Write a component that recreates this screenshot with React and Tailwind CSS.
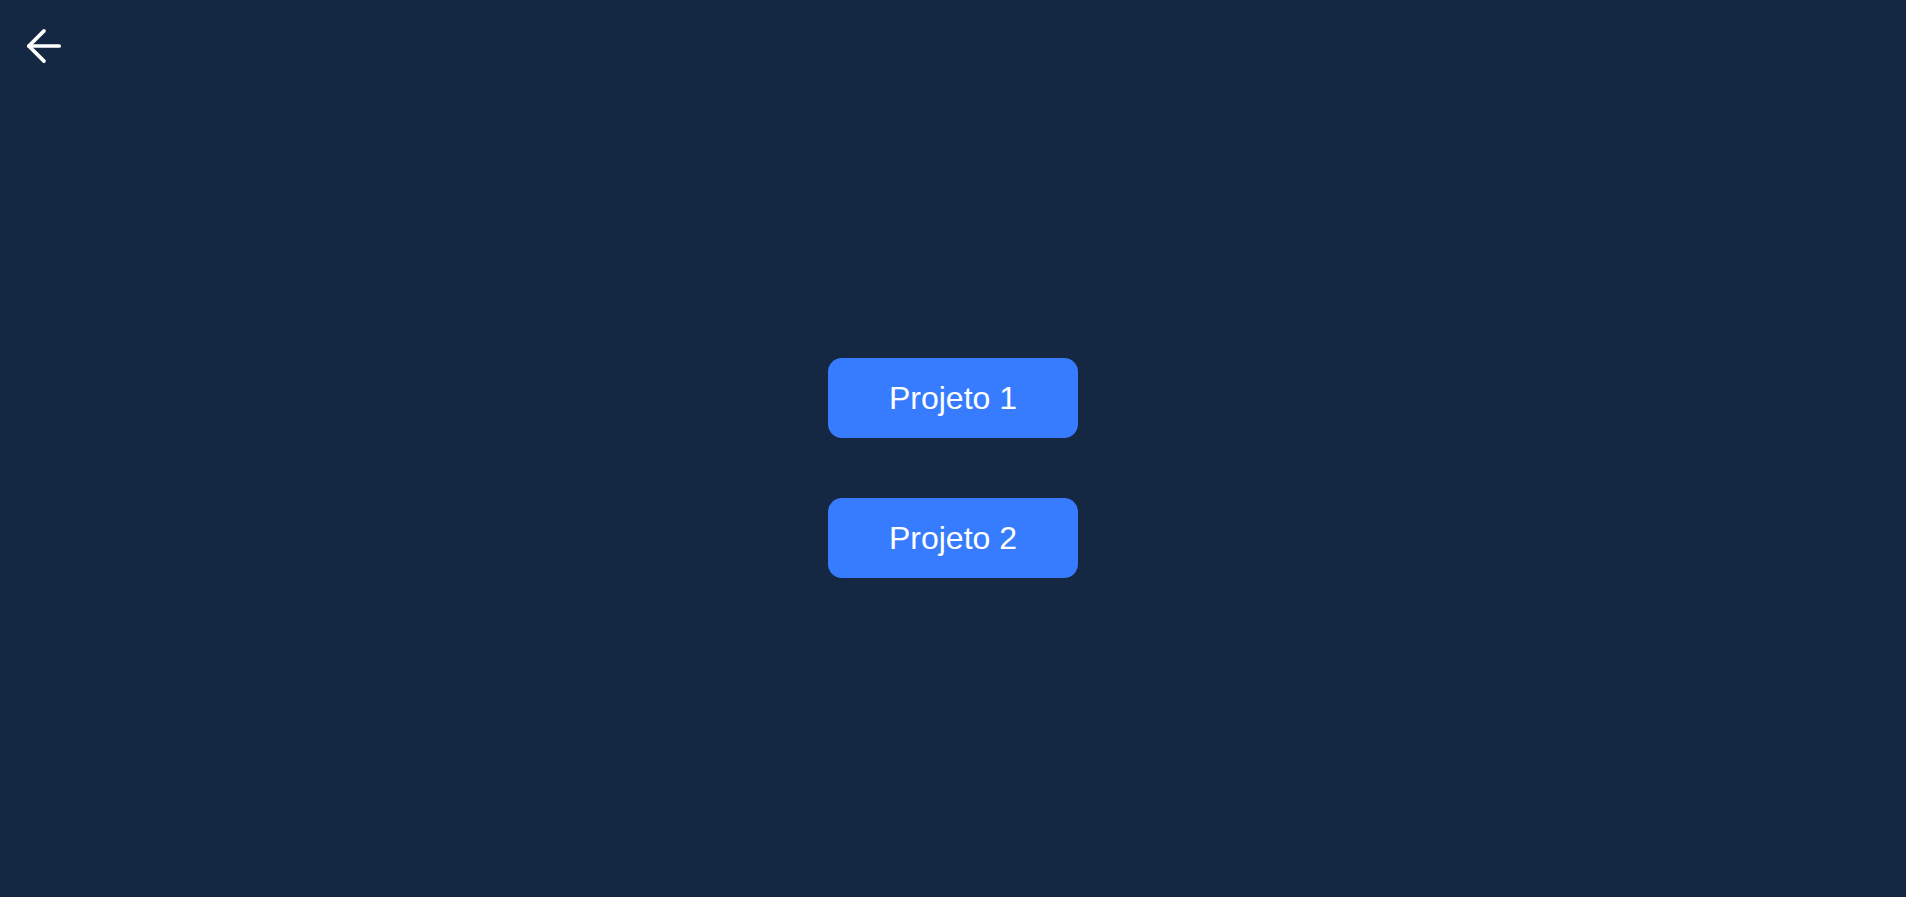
import { ArrowLeft } from 'lucide-react';
import React from 'react';

const projetos = ['Projeto 1', 'Projeto 2'];

const App = () => {
  return (
    <section className="min-h-screen w-full bg-[#142844] font-['Liberation_Sans',Arial,sans-serif] flex flex-col">
      <div className="pl-[18px] pt-[20px] h-[88px]">
        <button className="text-white">
          <ArrowLeft size={52} strokeWidth={1.7} />
        </button>
      </div>
      <div className="flex-1 flex flex-col items-center justify-center gap-[60px] pb-[50px]">
        {projetos.map((p) => (
          <button
            key={p}
            className="w-[250px] h-[80px] rounded-[14px] bg-[#377cff] text-white text-[32px]"
          >
            {p}
          </button>
        ))}
      </div>
    </section>
  );
};

export default App;
